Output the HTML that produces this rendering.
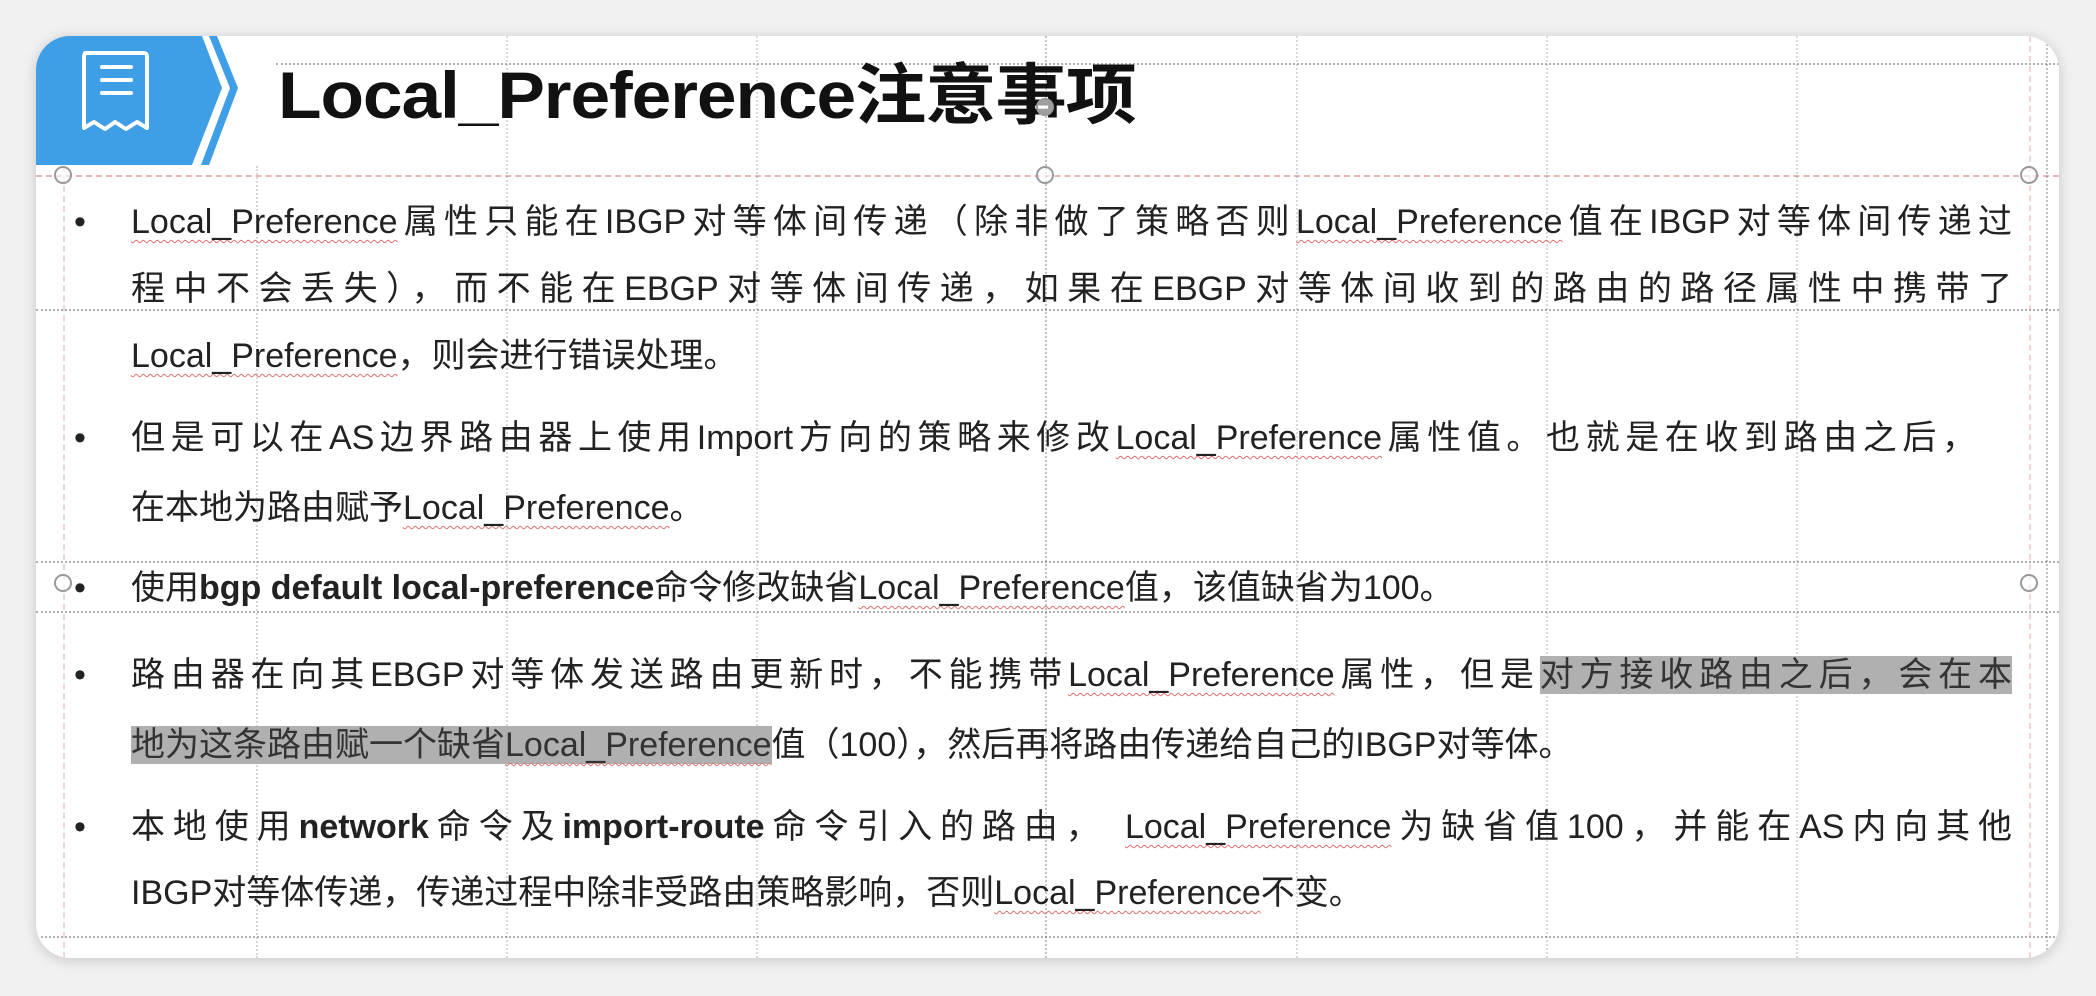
<!DOCTYPE html>
<html><head><meta charset="utf-8"><style>
*{margin:0;padding:0;box-sizing:border-box}
body{width:2096px;height:996px;background:#f1f1f1;position:relative;overflow:hidden;font-family:"Liberation Sans","Noto Sans CJK SC",sans-serif}
.card{position:absolute;left:36px;top:36px;width:2023px;height:922px;background:#fff;border-radius:34px;overflow:hidden;box-shadow:0 2px 14px rgba(0,0,0,.18)}
.hl{position:absolute;border-top:2px dotted #555;opacity:.45}
.vl{position:absolute;border-left:2px dotted #666;opacity:.4}
.title{position:absolute;left:242px;top:6px;font-size:66px;font-weight:bold;color:#111;white-space:nowrap;letter-spacing:-1px;transform:scaleX(1.08);transform-origin:left top}
.ln{position:absolute;left:95px;font-size:34px;color:#222;white-space:nowrap;line-height:44px}
.j{width:1881px;text-align:justify;text-align-last:justify;white-space:normal}
.b{position:absolute;left:38px;font-size:34px;line-height:44px;color:#222}
u{text-decoration:underline wavy #e07070 1px;text-underline-offset:6px}
.g{background:#b0b0b0;color:#333}
.h{position:absolute;width:18px;height:18px;border:2px solid #999;border-radius:50%;background:rgba(255,255,255,.6)}
</style></head><body>
<div class="card">
<svg width="240" height="130" style="position:absolute;left:0;top:0">
<polygon points="0,0 166,0 186,52 156,129 0,129" fill="#3f9fe6"/>
<polygon points="173,0 181,0 202,52 173,129 165,129 194,52" fill="#3f9fe6"/>
<g fill="none" stroke="#fff" stroke-width="4" stroke-linejoin="round" stroke-linecap="round">
<path d="M49,17 h59 a3,3 0 0 1 3,3 v72 l-10,-6 l-11,7 l-11,-7 l-10,7 l-11,-7 l-10,6 v-72 a3,3 0 0 1 3,-3z"/>
<path d="M66,31h29M66,44h29M66,57h29"/>
</g></svg>
<div class="hl" style="left:240px;top:27px;width:1783px"></div>
<div class="hl" style="left:0;top:139px;width:2023px;border-top:2px dashed #d99;opacity:.7"></div>
<div class="hl" style="left:0;top:273px;width:2023px"></div>
<div class="hl" style="left:0;top:525px;width:2023px"></div>
<div class="hl" style="left:0;top:575px;width:2023px"></div>
<div class="hl" style="left:0;top:900px;width:2023px"></div>
<div class="vl" style="left:27px;top:130px;height:792px;border-left:2px dashed #d99"></div>
<div class="vl" style="left:1009px;top:0;height:922px"></div>
<div class="vl" style="left:1993px;top:0;height:922px;border-left:2px dashed #d99"></div>
<div class="vl" style="left:2010px;top:0;height:922px"></div>
<div class="vl" style="left:220px;top:130px;height:792px;opacity:.25"></div>
<div class="vl" style="left:470px;top:0;height:922px;opacity:.25"></div>
<div class="vl" style="left:720px;top:0;height:922px;opacity:.25"></div>
<div class="vl" style="left:1260px;top:0;height:922px;opacity:.25"></div>
<div class="vl" style="left:1510px;top:0;height:922px;opacity:.25"></div>
<div class="vl" style="left:1760px;top:0;height:922px;opacity:.25"></div>
<div class="title">Local_Preference注意事项</div>
<div class="h" style="left:18px;top:130px"></div>
<div class="h" style="left:1000px;top:130px"></div>
<div class="h" style="left:1984px;top:130px"></div>
<div class="h" style="left:18px;top:538px"></div>
<div class="h" style="left:1984px;top:538px"></div>
<div class="h" style="left:1000px;top:62px"></div>

<div class="b" style="top:164px">•</div>
<div class="ln j" style="top:164px"><u>Local_Preference</u>属性只能在IBGP对等体间传递（除非做了策略否则<u>Local_Preference</u>值在IBGP对等体间传递过</div>
<div class="ln j" style="top:231px">程中不会丢失），而不能在EBGP对等体间传递，如果在EBGP对等体间收到的路由的路径属性中携带了</div>
<div class="ln" style="top:298px"><u>Local_Preference</u>，则会进行错误处理。</div>
<div class="b" style="top:380px">•</div>
<div class="ln j" style="top:380px;width:1845px">但是可以在AS边界路由器上使用Import方向的策略来修改<u>Local_Preference</u>属性值。也就是在收到路由之后，</div>
<div class="ln" style="top:450px">在本地为路由赋予<u>Local_Preference</u>。</div>
<div class="b" style="top:530px">•</div>
<div class="ln" style="top:530px">使用<b>bgp default local-preference</b>命令修改缺省<u>Local_Preference</u>值，该值缺省为100。</div>
<div class="b" style="top:617px">•</div>
<div class="ln j" style="top:617px">路由器在向其EBGP对等体发送路由更新时，不能携带<u>Local_Preference</u>属性，但是<span class="g">对方接收路由之后，会在本</span></div>
<div class="ln" style="top:687px"><span class="g">地为这条路由赋一个缺省<u>Local_Preference</u></span>值（100），然后再将路由传递给自己的IBGP对等体。</div>
<div class="b" style="top:769px">•</div>
<div class="ln j" style="top:769px">本地使用<b>network</b>命令及<b>import-route</b>命令引入的路由， <u>Local_Preference</u>为缺省值100，并能在AS内向其他</div>
<div class="ln" style="top:835px">IBGP对等体传递，传递过程中除非受路由策略影响，否则<u>Local_Preference</u>不变。</div>
</div>
</body></html>
